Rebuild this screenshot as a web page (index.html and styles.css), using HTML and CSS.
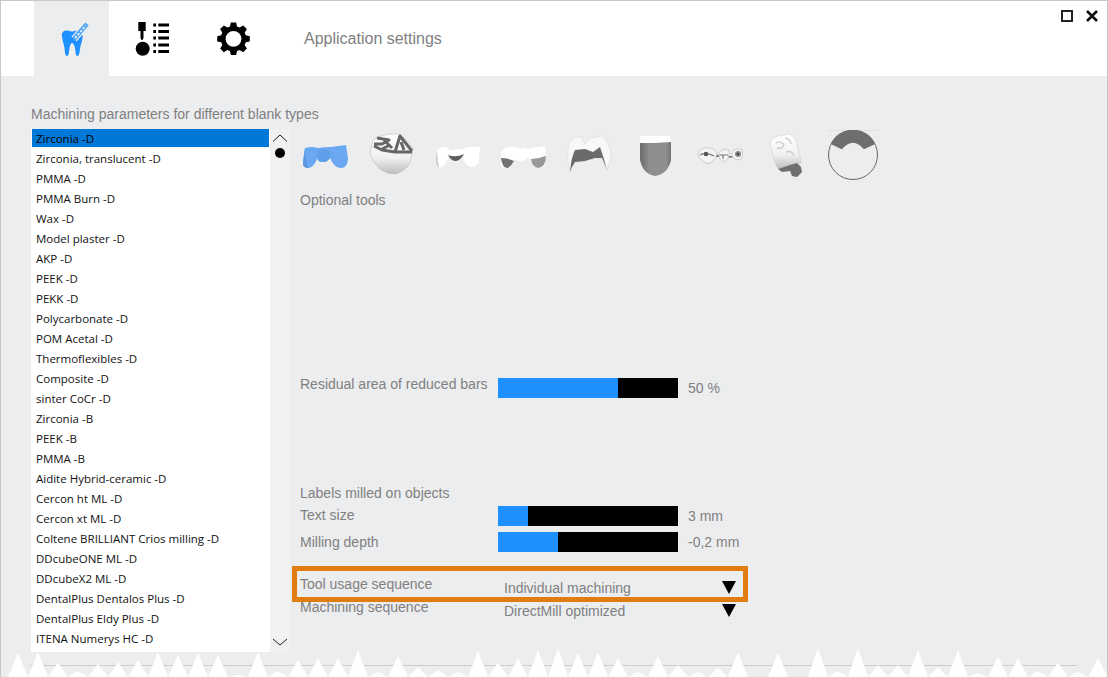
FILE: index.html
```html
<!DOCTYPE html>
<html lang="en">
<head>
    <meta charset="UTF-8">
    <title>Application settings</title>
    <link rel="stylesheet" href="styles.css">
</head>
<body>
    <div class="window">
        <header class="topbar">
            <div class="tab tab-active">
                <svg width="75" height="75" viewBox="0 0 75 75">
                    <path fill="#1e90ff" d="M28 35C27 30 32 28.500 36 30Q38 31 40 30C45 28.500 49 30 48.500 36C48 42 46.500 44 46 48C45.500 52 45 55 43.500 55C41.500 55 41.500 50 41 47C40.500 44 39 42 38 42C37 42 36 44 35.500 47C35 50 35 55 33 55C31 55 31 51 30.500 47C30 43 28.500 41 28 35Z"/>
                    <path fill="none" stroke="#ecedef" stroke-width="7" d="M40 38L53 23"/>
                    <path fill="none" stroke="#4aa3f5" stroke-width="4.500" d="M39.500 38.500L53 23"/>
                    <path fill="none" stroke="#d5e8fa" stroke-width="2" stroke-dasharray="2.500 1.500" d="M41 37L52 24.500"/>
                </svg>
            </div>
            <div class="tab">
                <svg width="75" height="75" viewBox="0 0 75 75">
                    <path d="M23.300 21h7.400v9h-2.200v7l-1 2h-1l-1-2v-7h-2.200z"/>
                    <circle cx="27.700" cy="47.700" r="7"/>
                    <path d="M38.300 22.500H41v3h-2.700zM43.300 22.500H54v3H43.300zM38.300 29H41v3h-2.700zM43.300 29H54v3H43.300zM38.300 35.500H41v3h-2.700zM43.300 35.500H54v3H43.300zM38.300 42.500H41v3h-2.700zM43.300 42.500H54v3H43.300zM38.300 49H41v3h-2.700zM43.300 49H54v3H43.300z"/>
                </svg>
            </div>
            <div class="tab">
                <svg width="75" height="75" viewBox="0 0 75 75">
                    <g transform="translate(37.500 37.800) scale(.88) translate(-37.500 -40.500)">
                        <path fill-rule="evenodd" d="M34.500 22h6l1 4.500 3 1.300 4-2.500 4.200 4.200-2.500 4 1.300 3 4.500 1v6l-4.500 1-1.300 3 2.500 4-4.200 4.200-4-2.500-3 1.300-1 4.500h-6l-1-4.500-3-1.300-4 2.500-4.200-4.200 2.500-4-1.300-3-4.500-1v-6l4.500-1 1.300-3-2.500-4 4.200-4.200 4 2.500 3-1.300zM37.500 31.500a9 9 0 1 0 0 18 9 9 0 0 0 0-18z"/>
                    </g>
                </svg>
            </div>
            <h1 class="page-title">Application settings</h1>
            <div class="win-controls">
                <span class="win-max"></span>
                <svg width="12" height="12" viewBox="0 0 12 12">
                    <path fill="none" stroke="#111" stroke-width="2.600" d="M1 1l10 10M11 1L1 11"/>
                </svg>
            </div>
        </header>

        <main class="content">
            <div class="section-title">Machining parameters for different blank types</div>
            <div class="columns">
                <div class="blank-list">
                    <ul class="list">
                        <li class="selected">Zirconia -D</li>
                        <li>Zirconia, translucent -D</li>
                        <li>PMMA -D</li>
                        <li>PMMA Burn -D</li>
                        <li>Wax -D</li>
                        <li>Model plaster -D</li>
                        <li>AKP -D</li>
                        <li>PEEK -D</li>
                        <li>PEKK -D</li>
                        <li>Polycarbonate -D</li>
                        <li>POM Acetal -D</li>
                        <li>Thermoflexibles -D</li>
                        <li>Composite -D</li>
                        <li>sinter CoCr -D</li>
                        <li>Zirconia -B</li>
                        <li>PEEK -B</li>
                        <li>PMMA -B</li>
                        <li>Aidite Hybrid-ceramic -D</li>
                        <li>Cercon ht ML -D</li>
                        <li>Cercon xt ML -D</li>
                        <li>Coltene BRILLIANT Crios milling -D</li>
                        <li>DDcubeONE ML -D</li>
                        <li>DDcubeX2 ML -D</li>
                        <li>DentalPlus Dentalos Plus -D</li>
                        <li>DentalPlus Eldy Plus -D</li>
                        <li>ITENA Numerys HC -D</li>
                    </ul>
                    <div class="scrollbar">
                        <svg width="20" height="32" viewBox="0 0 20 32">
                            <path fill="none" stroke="#222" d="M3 12.500l7-6.500 7 6.500"/>
                            <circle cx="10" cy="24" r="5"/>
                        </svg>
                        <svg width="20" height="20" viewBox="0 0 20 20">
                            <path fill="none" stroke="#222" d="M3 8l7 6 7-6"/>
                        </svg>
                    </div>
                </div>

                <div class="params">
                    <div class="thumbs">
                        <svg width="66" height="50" viewBox="0 0 66 50">
                            <defs>
                                <linearGradient id="crown" x1="0" y1="0" x2="0" y2="1">
                                    <stop offset="0" stop-color="#fff"/>
                                    <stop offset=".6" stop-color="#f0f0f0"/>
                                    <stop offset="1" stop-color="#bdbdbd"/>
                                </linearGradient>
                                <linearGradient id="cap" x1="0" y1="0" x2="1" y2="0">
                                    <stop offset="0" stop-color="#6a6a6a"/>
                                    <stop offset=".3" stop-color="#8e8e8e"/>
                                    <stop offset=".85" stop-color="#8e8e8e"/>
                                    <stop offset="1" stop-color="#707070"/>
                                </linearGradient>
                            </defs>
                            <path class="soft" fill="#6aa9f2" d="M13 18Q20 16 26 18 32 17 39 17 47 16 54 15L56 28C56 33 54 38 49 38 44 38 40 33 38 28 35 32 33 32 31 32 28 32 26 31 25 28 24 33 20 38 16 38 12 38 11 35 11 30Z"/>
                            <path class="soft" fill="#5b97e2" d="M13 18Q13 28 16 38 12 38 11 35 11 30Z"/>
                            <path class="soft" fill="#5f9ee8" d="M25 21Q31 17 38 21L38 28C35 32 33 32 31 32 28 32 26 31 25 28Z"/>
                        </svg>
                        <svg width="66" height="50" viewBox="0 0 66 50">
                            <path class="soft" fill="url(#crown)" stroke="#b8b8b8" stroke-width=".6" d="M15 10L20 7Q30 3 40 4 50 10 55 18L52 33Q46 42 37 44 30 44 23 40 14 32 12 22Z"/>
                            <path class="soft" fill="none" stroke="#666" stroke-width="3" stroke-linejoin="round" d="M19 8L31 10 24 14 16 14M16 16L24 20 37 22 54 22M37 22L42 6 54 21M26 10L34 18M30 16L24 19M43 12L46 20"/>
                        </svg>
                        <svg width="66" height="50" viewBox="0 0 66 50">
                            <path class="soft" fill="#fff" d="M13 20Q18 15 23 17 26 22 29 20L38 19Q46 16 56 17L55 30C55 34 52 37 47 37 42 35 40 31 39 27 35 32 29 32 24 27 23 32 20 37 15 38 12 36 12 28Z"/>
                            <path class="soft" fill="#c9c9c9" d="M13 21Q13 30 15 38 12 36 12 28Z"/>
                            <path class="soft" fill="#5c5c5c" d="M24 25Q32 28 40 24 36 31 32 31 27 31 24 25Z"/>
                        </svg>
                        <svg width="66" height="50" viewBox="0 0 66 50">
                            <path class="soft" fill="#fff" d="M11 22Q15 17 20 17 26 16 30 19 33 17 38 19 46 17 55 16L56 30C56 35 53 38 48 38 44 38 41 34 41 29L37 28Q33 32 30 31 26 30 24 29 23 34 19 38 15 38 11 37 11 30Z"/>
                            <path class="soft" fill="#707070" d="M11 28Q18 28 24 31 22 35 18 38 12 38 11 28Z"/>
                            <path class="soft" fill="#999" d="M41 29Q48 29 56 26 56 37 48 38 42 37 41 29Z"/>
                        </svg>
                        <svg width="66" height="50" viewBox="0 0 66 50">
                            <path class="soft" fill="#f8f8f8" stroke="#d4d4d4" stroke-width=".5" d="M14 42Q10 28 13 13 17 6 25 7L29 14Q32 7 46 6 54 12 55 27L51 40Q48 32 46 28L39 28 29 31 19 32Q15 38 14 42Z"/>
                            <path class="soft" fill="#6b6b6b" d="M14 42Q15 28 19 20L29 19 37 22 44 17Q48 28 51 40 48 32 46 28L39 28 29 31 19 32Q16 36 14 42Z"/>
                        </svg>
                        <svg width="66" height="50" viewBox="0 0 66 50">
                            <path class="soft" fill="url(#cap)" d="M18 12H49V30Q46 44 33 46 21 44 18 30Z"/>
                            <path class="soft" fill="#fff" d="M18 6H48L49 12 33 13 18 13Z"/>
                        </svg>
                        <svg width="66" height="50" viewBox="0 0 66 50">
                            <path class="soft" fill="#6f6f6f" d="M26 25H32V27H26ZM40 26H45V27.500H40Z"/>
                            <path class="soft" fill="#f4f4f4" stroke="#bcbcbc" stroke-width=".7" d="M10 24Q13 17 19 18 25 17 29 23 28 30 22 33 16 34 14 30 10 29 10 24Z"/>
                            <path class="soft" fill="#f4f4f4" stroke="#bcbcbc" stroke-width=".7" d="M30 24Q34 18 41 20 42 27 38 31 34 33 32 29Z"/>
                            <path class="soft" fill="#f4f4f4" stroke="#bcbcbc" stroke-width=".7" d="M44 22Q48 17 54 20 56 26 52 30 46 30 44 26Z"/>
                            <path class="soft" fill="none" stroke="#777" stroke-width="1.200" d="M12 25Q18 22 26 26"/>
                            <circle class="soft" cx="18" cy="24" r="2.300" fill="#555"/>
                            <path class="soft" fill="none" stroke="#777" stroke-width="1.200" d="M31 25H40M35 25V29"/>
                            <circle class="soft" cx="50" cy="24" r="3" fill="#8a8a8a"/>
                            <circle class="soft" cx="50" cy="24" r="1.300" fill="#444"/>
                        </svg>
                        <svg width="66" height="50" viewBox="0 0 66 50">
                            <path class="soft" fill="url(#crown)" stroke="#c8c8c8" stroke-width=".5" d="M16 12Q20 6 24 6L36 4Q42 8 43 15 46 24 47 33L36 35 24 39Q18 28 16 12Z"/>
                            <path class="soft" fill="none" stroke="#cfcfcf" stroke-width="1.400" d="M22 13Q27 10 30 15 27 20 23 18M32 22Q38 20 40 26M31 8Q36 9 37 14"/>
                            <path class="soft" fill="#6f6f6f" d="M24 39L36 35 43 33 47 37 48 42 43 47 38 46 36 41 28 42Z"/>
                        </svg>
                        <svg width="66" height="50" viewBox="0 0 66 50">
                            <path fill="none" stroke="#e0e0e0" d="M8 .5H58"/>
                            <circle cx="33" cy="25" r="24.500" fill="none" stroke="#666"/>
                            <path fill="#6e6e6e" d="M10.700 14A24.500 24.500 0 0 1 55.300 14L44 19.300Q33 6 21.700 19.300Z"/>
                        </svg>
                    </div>
                    <div class="field-title">Optional tools</div>

                    <div class="slider-row row-residual">
                        <div class="slider-label label-residual">Residual area of reduced bars</div>
                        <div class="slider"><div class="slider-fill fill-120"></div></div>
                        <div class="slider-value">50 %</div>
                    </div>

                    <div class="field-title labels-title">Labels milled on objects</div>
                    <div class="slider-row row-text">
                        <div class="slider-label label-text">Text size</div>
                        <div class="slider"><div class="slider-fill fill-30"></div></div>
                        <div class="slider-value">3 mm</div>
                    </div>
                    <div class="slider-row row-depth">
                        <div class="slider-label label-depth">Milling depth</div>
                        <div class="slider"><div class="slider-fill fill-60"></div></div>
                        <div class="slider-value">-0,2 mm</div>
                    </div>

                    <div class="sequences">
                        <div class="seq-row">
                            <div class="seq-label">Tool usage sequence</div>
                            <div class="seq-value">Individual machining</div>
                            <span class="seq-arrow"></span>
                        </div>
                        <div class="seq-row">
                            <div class="seq-label">Machining sequence</div>
                            <div class="seq-value">DirectMill optimized</div>
                            <span class="seq-arrow"></span>
                        </div>
                        <div class="highlight"></div>
                    </div>
                </div>
            </div>
        </main>

        <div class="footer-line"></div>
        <svg class="torn-edge" width="1108" height="32" viewBox="0 645 1108 32">
            <path fill="#fff" d="M0 677L8 677 18 653 28 677 38 652 48 677 58 663 68 677 78 671 88 677 98 664 108 677 118 662 128 677 138 660 148 677 158 652 168 677 178 655 188 677 198 653 208 677 218 655 228 677 238 675 248 677 258 652 268 677 278 671 288 677 298 660 308 677 318 658 328 677 338 658 348 677 358 650 368 677 378 672 388 677 398 656 408 677 418 667 428 677 438 670 448 677 458 672 468 677 478 651 488 677 498 663 508 677 518 658 528 677 538 650 548 677 558 648 568 677 578 653 588 677 598 652 608 677 618 658 628 677 638 672 648 677 658 656 668 677 678 665 688 677 698 672 708 677 718 668 728 677 738 652 748 677 758 677 768 677 778 653 788 677 798 677 808 677 818 648 828 677 838 671 848 677 858 648 868 677 878 665 888 677 898 665 908 677 918 650 928 677 938 667 948 677 958 650 968 677 978 673 988 677 998 657 1008 677 1018 658 1028 677 1038 671 1048 677 1058 663 1068 677 1078 672 1088 677 1098 658 1108 677Z"/>
        </svg>
    </div>
</body>
</html>
```

FILE: styles.css
```css
html, body {
    margin: 0;
    padding: 0;
}
body {
    font-family: "Liberation Sans", Arial, sans-serif;
    font-size: 14px;
    color: #808080;
    background: #fff;
}
.window {
    position: relative;
    box-sizing: border-box;
    width: 1108px;
    height: 677px;
    overflow: hidden;
    background: #ecedef;
    border: 1px solid #c8c8c8;
    border-bottom: none;
}
.topbar {
    position: relative;
    display: flex;
    height: 75px;
    padding-left: 33px;
    background: #fff;
}
.tab {
    width: 75px;
    height: 75px;
    margin-right: 6px;
}
.tab svg {
    display: block;
}
.tab-active {
    background: #ecedef;
}
.page-title {
    margin: 0 0 0 27px;
    font-size: 16px;
    font-weight: normal;
    line-height: 75px;
    height: 75px;
}
.win-controls {
    position: absolute;
    top: 9px;
    right: 9px;
    display: flex;
    align-items: center;
    gap: 13px;
}
.win-max {
    box-sizing: border-box;
    width: 12px;
    height: 12px;
    border: 2px solid #222;
}
.content {
    padding: 30px 0 0 30px;
}
.section-title {
    height: 16px;
    line-height: 16px;
    margin-bottom: 7px;
}
.columns {
    display: flex;
}
.blank-list {
    display: flex;
    width: 259px;
    height: 523px;
}
.list {
    box-sizing: border-box;
    width: 239px;
    height: 523px;
    margin: 0;
    padding: 0 1px;
    list-style: none;
    background: #fff;
    font-family: "Open Sans", "Noto Sans", sans-serif;
    font-size: 11.500px;
    color: #111;
}
.list li {
    height: 20px;
    line-height: 20px;
    padding-left: 4px;
    white-space: nowrap;
}
.list li.selected {
    height: 18px;
    margin-bottom: 2px;
    background: #0078d7;
    color: #000;
}
.scrollbar {
    display: flex;
    flex-direction: column;
    justify-content: space-between;
    width: 20px;
    height: 523px;
    padding-bottom: 1px;
    box-sizing: border-box;
    background: #f1f1f2;
}
.scrollbar svg {
    display: block;
}
.params {
    width: 780px;
    padding-left: 10px;
}
.thumbs {
    display: flex;
    margin: 1px 0 0 -8px;
}
.thumbs svg {
    display: block;
}
.soft {
    filter: blur(0.4px);
}
.field-title {
    height: 16px;
    line-height: 16px;
    margin-top: 12px;
}
.labels-title {
    margin-top: 87px;
}
.slider-row {
    display: flex;
    align-items: flex-start;
    height: 20px;
}
.row-residual {
    margin-top: 170px;
}
.row-text {
    margin-top: 5px;
}
.row-depth {
    margin-top: 6px;
}
.slider-label {
    width: 198px;
    line-height: 16px;
}
.label-residual {
    margin-top: -2px;
}
.label-text {
    margin-top: 1px;
}
.label-depth {
    margin-top: 2px;
}
.slider {
    width: 180px;
    height: 20px;
    background: #000;
}
.slider-fill {
    height: 20px;
    background: #1e90ff;
}
.fill-120 {
    width: 120px;
}
.fill-30 {
    width: 30px;
}
.fill-60 {
    width: 60px;
}
.slider-value {
    margin-left: 10px;
    line-height: 20px;
}
.sequences {
    position: relative;
    margin-top: 24px;
}
.seq-row {
    display: flex;
    align-items: flex-start;
    height: 23px;
}
.seq-label {
    width: 204px;
    line-height: 16px;
}
.seq-value {
    width: 218px;
    margin-top: 4px;
    line-height: 16px;
}
.seq-arrow {
    width: 0;
    height: 0;
    margin-top: 5px;
    border-left: 7.500px solid transparent;
    border-right: 7.500px solid transparent;
    border-top: 13px solid #000;
}
.highlight {
    position: absolute;
    top: -10px;
    left: -8px;
    box-sizing: border-box;
    width: 456px;
    height: 36px;
    border: 5px solid #e07c10;
}
.footer-line {
    position: absolute;
    left: 29px;
    top: 664px;
    width: 1047px;
    height: 1px;
    background: #cfcfd1;
}
.torn-edge {
    position: absolute;
    left: -1px;
    bottom: 0;
}
```
